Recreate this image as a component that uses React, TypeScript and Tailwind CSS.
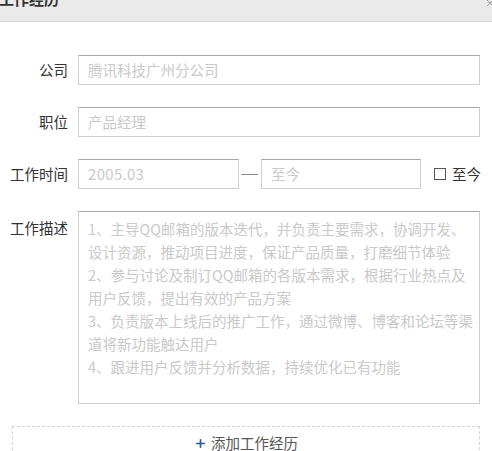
import { Plus, X } from "lucide-react";

const font = { fontFamily: '"Noto Sans CJK SC", "Noto Sans", sans-serif' };

const descLines = [
  "1、主导QQ邮箱的版本迭代，并负责主要需求，协调开发、",
  "设计资源，推动项目进度，保证产品质量，打磨细节体验",
  "2、参与讨论及制订QQ邮箱的各版本需求，根据行业热点及",
  "用户反馈，提出有效的产品方案",
  "3、负责版本上线后的推广工作，通过微博、博客和论坛等渠",
  "道将新功能触达用户",
  "4、跟进用户反馈并分析数据，持续优化已有功能",
];

function Field({ placeholder, className }: { placeholder: string; className: string }) {
  return (
    <div
      className={`flex h-[30px] items-center border border-[#cfcfcf] border-t-[#a8a8a8] bg-white pl-[9px] text-[14.5px] text-[#c9c9c9] ${className}`}
    >
      {placeholder}
    </div>
  );
}

export default function App() {
  return (
    <div className="h-[451px] w-[492px] overflow-hidden bg-white" style={font}>
      <div className="flex h-[22px] items-start justify-between overflow-hidden border-b border-[#d9d9d9] bg-[#eaeaea]">
        <span className="-mt-[11px] -ml-[1px] text-[15px] leading-[20px] font-bold text-[#333]">
          工作经历
        </span>
        <X className="-mt-[3px] -mr-[4px] h-[12px] w-[12px] text-[#9a9a9a]" strokeWidth={2} />
      </div>

      <div className="flex flex-col gap-[22px] pt-[33px]">
        <div className="flex items-center">
          <span className="w-[68px] text-right text-[14.5px] text-[#333]">公司</span>
          <Field placeholder="腾讯科技广州分公司" className="ml-[10px] w-[402px]" />
        </div>

        <div className="flex items-center">
          <span className="w-[68px] text-right text-[14.5px] text-[#333]">职位</span>
          <Field placeholder="产品经理" className="ml-[10px] w-[402px]" />
        </div>

        <div className="flex items-center">
          <span className="w-[68px] text-right text-[14.5px] text-[#333]">工作时间</span>
          <Field placeholder="2005.03" className="ml-[10px] w-[161px] text-[15px] tracking-[0.3px]" />
          <span className="ml-[2px] h-[1px] w-[17px] bg-[#8a8a8a]" />
          <Field placeholder="至今" className="ml-[3px] w-[160px]" />
          <span className="ml-[13px] h-[12px] w-[12px] border border-[#555] bg-white" />
          <span className="ml-[6px] text-[14.5px] text-[#333]">至今</span>
        </div>

        <div className="flex items-start">
          <span className="w-[68px] pt-[6px] text-right text-[14.5px] text-[#333]">工作描述</span>
          <div className="ml-[10px] h-[193px] w-[402px] overflow-hidden border border-[#cfcfcf] border-t-[#a8a8a8] pt-[5px] pl-[9px] text-[14.5px] leading-[23px] text-[#c9c9c9]">
            {descLines.map((line) => (
              <div key={line} className="whitespace-nowrap">
                {line}
              </div>
            ))}
          </div>
        </div>

        <div className="ml-[12px] flex h-[40px] w-[468px] items-start justify-center border border-dashed border-[#d2d2d2] pt-[9px]">
          <Plus className="mt-[1px] h-[13px] w-[13px] text-[#2b5a94]" strokeWidth={3} />
          <span className="ml-[4px] text-[14.5px] leading-[14px] text-[#555]">添加工作经历</span>
        </div>
      </div>
    </div>
  );
}
